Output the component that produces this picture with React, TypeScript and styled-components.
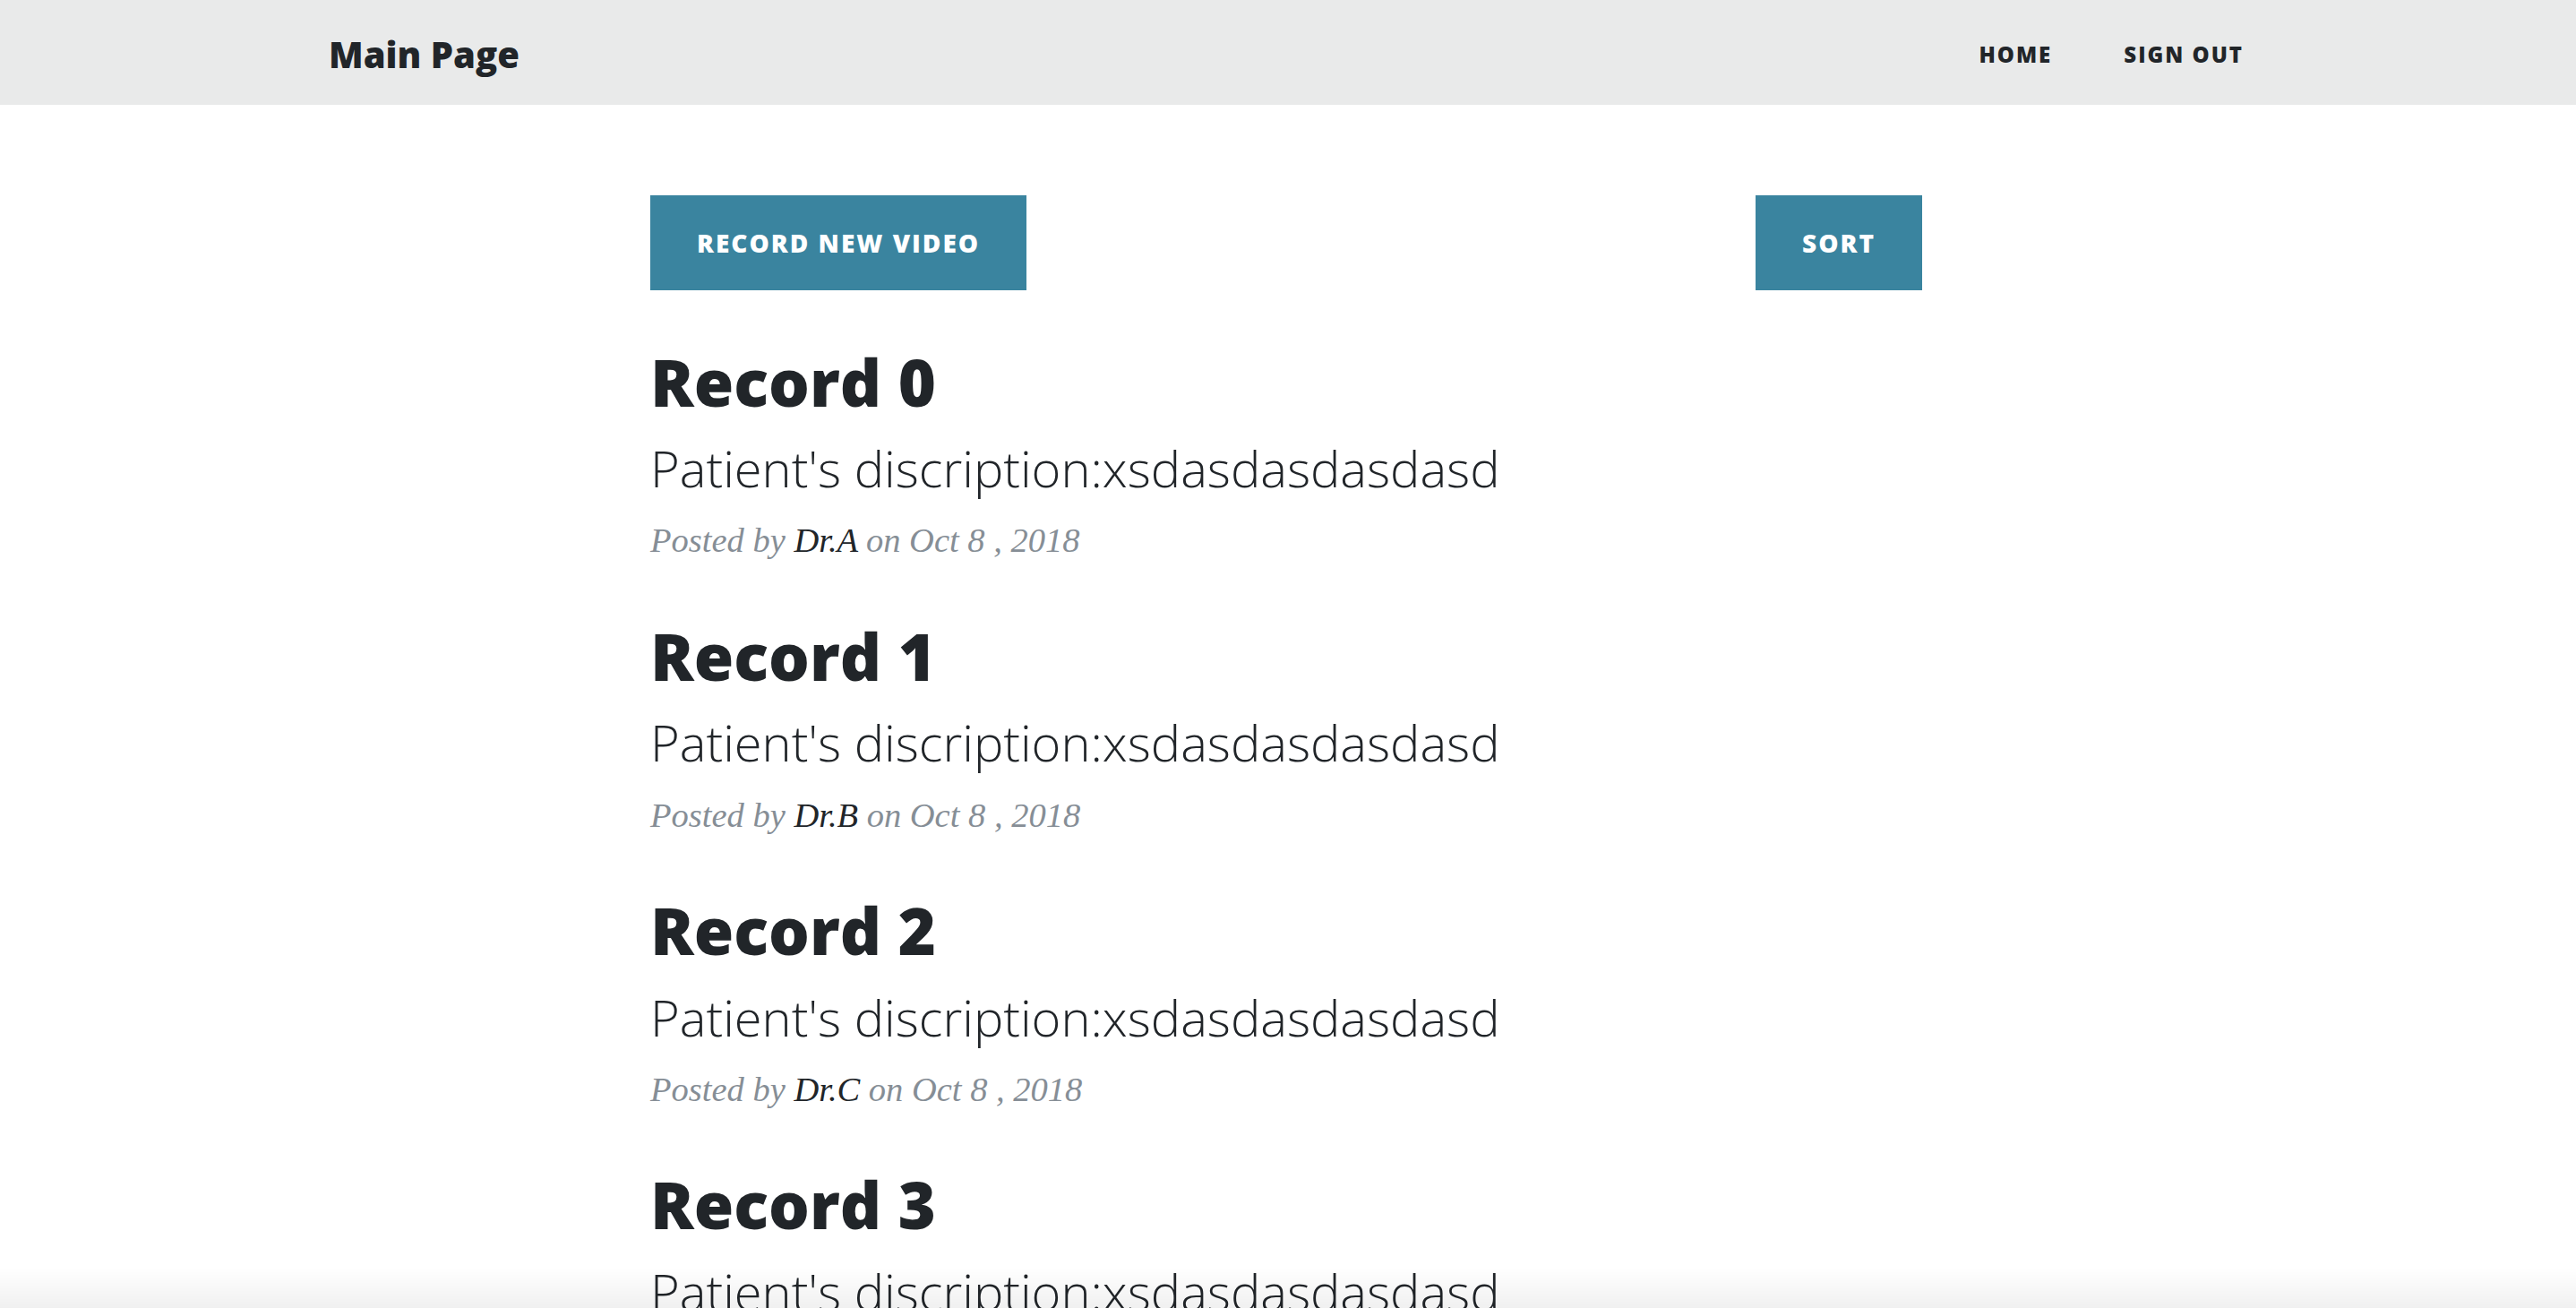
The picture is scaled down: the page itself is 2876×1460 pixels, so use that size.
import React from 'react';
import styled, { createGlobalStyle } from 'styled-components';

const GlobalStyle = createGlobalStyle`
  html, body {
    margin: 0;
    padding: 0;
    background: #ffffff;
    color: #212529;
    font-family: 'Open Sans', 'Liberation Sans', sans-serif;
  }

  body {
    overflow: hidden;
  }
`;

const NavBar = styled.header`
  display: flex;
  align-items: center;
  justify-content: space-between;
  height: 117px;
  padding: 0 331px 0 367px;
  background: #e9eaea;
  box-sizing: border-box;
`;

const Brand = styled.a`
  font-family: 'Open Sans', sans-serif;
  font-size: 40px;
  font-weight: 800;
  color: #212529;
  text-decoration: none;
  margin-top: 4px;
`;

const NavLinks = styled.nav`
  display: flex;
  align-items: center;
  margin-top: 4px;
`;

const NavLink = styled.a`
  padding: 0 40px;
  font-family: 'Open Sans', sans-serif;
  font-size: 24px;
  font-weight: 800;
  letter-spacing: 2px;
  text-transform: uppercase;
  color: #212529;
  text-decoration: none;
`;

const Content = styled.main`
  width: 1420px;
  margin-left: 726px;
  padding-top: 101px;
`;

const Toolbar = styled.div`
  display: flex;
  justify-content: space-between;
  align-items: center;
`;

const Button = styled.button`
  height: 106px;
  padding: 0 50px;
  border: 2px solid #3a849f;
  border-radius: 0;
  background: #3a849f;
  color: #ffffff;
  font-family: 'Open Sans', sans-serif;
  font-size: 28px;
  font-weight: 800;
  letter-spacing: 2px;
  text-transform: uppercase;
  cursor: pointer;
`;

const RecordItem = styled.article`
  margin-top: 58.7px;
`;

const RecordTitle = styled.h2`
  margin: 0 0 20px;
  font-family: 'Open Sans', sans-serif;
  font-size: 72px;
  font-weight: 800;
  line-height: 1.2;
  color: #212529;
`;

const RecordSubtitle = styled.h3`
  margin: 0 0 20px;
  font-family: 'Open Sans', sans-serif;
  font-size: 56px;
  font-weight: 300;
  line-height: 1.2;
  color: #212529;
`;

const RecordMeta = styled.p`
  margin: 0;
  font-family: 'Liberation Serif', 'DejaVu Serif', serif;
  font-style: italic;
  font-size: 38.5px;
  line-height: 54px;
  color: #868e96;

  a {
    color: #212529;
    text-decoration: none;
  }
`;

const WindowEdge = styled.div`
  position: fixed;
  left: 0;
  right: 0;
  bottom: 0;
  height: 44px;
  pointer-events: none;
  background: linear-gradient(to bottom, rgba(255, 255, 255, 0), rgba(0, 0, 0, 0.06));
`;

const records = [
  { title: 'Record 0', doctor: 'Dr.A' },
  { title: 'Record 1', doctor: 'Dr.B' },
  { title: 'Record 2', doctor: 'Dr.C' },
  { title: 'Record 3', doctor: 'Dr.D' },
];

const App: React.FC = () => {
  return (
    <>
      <GlobalStyle />
      <NavBar>
        <Brand href='#'>Main Page</Brand>
        <NavLinks>
          <NavLink href='#'>Home</NavLink>
          <NavLink href='#'>Sign Out</NavLink>
        </NavLinks>
      </NavBar>
      <Content>
        <Toolbar>
          <Button>Record New Video</Button>
          <Button>Sort</Button>
        </Toolbar>
        {records.map((record) => (
          <RecordItem key={record.title}>
            <RecordTitle>{record.title}</RecordTitle>
            <RecordSubtitle>Patient's discription:xsdasdasdasdasd</RecordSubtitle>
            <RecordMeta>
              Posted by <a href='#'>{record.doctor}</a> on Oct 8 , 2018
            </RecordMeta>
          </RecordItem>
        ))}
      </Content>
      <WindowEdge />
    </>
  );
};

export default App;
